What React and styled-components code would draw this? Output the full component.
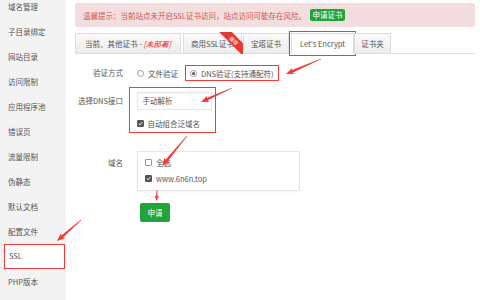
import styled, { createGlobalStyle } from "styled-components";

const GlobalStyle = createGlobalStyle`
  html, body { margin: 0; padding: 0; background: #fff; }
  body {
    font-family: "Noto Sans CJK SC", "Liberation Sans", sans-serif;
    font-size: 7.5px;
    color: #555;
  }
  * { box-sizing: border-box; }
`;

const RED = "#f23a3a";
const GREEN = "#20a53a";

const Page = styled.div`
  position: relative;
  display: flex;
  width: 480px;
  height: 300px;
  overflow: hidden;
`;

const Sidebar = styled.ul`
  width: 66px;
  flex: none;
  margin: 0;
  padding: 0;
  list-style: none;
  background: #f3f3f3;
`;

const NavItem = styled.li`
  height: 25px;
  line-height: 25px;
  padding-left: 8px;
  color: #555;
  white-space: nowrap;
  &:first-child { margin-top: -6px; }
  ${(p) =>
    p.$active &&
    `
    margin: 0 1px 0 4px;
    padding-left: 4px;
    line-height: 22px;
    background: #fff;
    border: 1.5px solid ${RED};
  `}
`;

const Main = styled.div`
  flex: 1;
  padding: 3px 5px 0 9px;
`;

const Notice = styled.div`
  display: flex;
  align-items: center;
  height: 24px;
  padding: 0 8px;
  background: #f2dede;
  border-radius: 3px;
  color: #d9534f;
  white-space: nowrap;
`;

const GreenBtn = styled.button`
  border: none;
  border-radius: 2px;
  background: ${GREEN};
  color: #fff;
  font: inherit;
  padding: 0;
  width: ${(p) => (p.$big ? "30px" : "35px")};
  height: ${(p) => (p.$big ? "19px" : "12px")};
  line-height: ${(p) => (p.$big ? "19px" : "12px")};
  margin-left: ${(p) => (p.$big ? "0" : "4px")};
`;

const Tabs = styled.div`
  display: flex;
  margin-top: 6px;
  height: 21px;
  border-bottom: 1px solid #ddd;
`;

const Tab = styled.div`
  position: relative;
  height: 21px;
  line-height: 19px;
  padding: 0 ${(p) => p.$pad || 8}px;
  margin-right: ${(p) => p.$mr ?? 1}px;
  border: 1px solid #ddd;
  background: ${(p) => (p.$active ? "#fff" : "linear-gradient(#fafafa, #ececec)")};
  color: #555;
  white-space: nowrap;
  ${(p) =>
    p.$active &&
    `
    border-bottom-color: #fff;
    outline: 1.5px solid ${RED};
    outline-offset: 1px;
  `}
`;

const Undeployed = styled.span`
  color: #f22;
  font-style: italic;
`;

const RibbonClip = styled.div`
  position: absolute;
  top: -2px;
  right: -2px;
  width: 25px;
  height: 22px;
  overflow: hidden;
`;

const RibbonBand = styled.div`
  position: absolute;
  left: -4px;
  top: 4px;
  width: 40px;
  height: 9px;
  line-height: 9px;
  background: #e53935;
  color: #fff;
  font-size: 5px;
  text-align: center;
  transform: rotate(45deg);
`;

const Form = styled.div`
  margin-top: 11px;
`;

const Row = styled.div`
  display: flex;
  align-items: flex-start;
  margin-top: ${(p) => p.$gap || 0}px;
`;

const Label = styled.div`
  width: 48px;
  margin-right: 14px;
  text-align: right;
  white-space: nowrap;
  padding-top: ${(p) => p.$top || 0}px;
  line-height: ${(p) => p.$lh || 16}px;
`;

const Options = styled.div`
  display: flex;
  align-items: center;
  height: 16px;
`;

const Option = styled.label`
  display: flex;
  align-items: center;
  gap: 4px;
  white-space: nowrap;
  ${(p) =>
    p.$marked &&
    `
    height: 16px;
    margin-left: 7px;
    padding: 0 4px;
    border: 1.5px solid ${RED};
  `}
`;

const Radio = styled.span`
  width: 7px;
  height: 7px;
  border: 1px solid #999;
  border-radius: 50%;
  display: flex;
  align-items: center;
  justify-content: center;
  &::after {
    content: "";
    display: ${(p) => (p.$on ? "block" : "none")};
    width: 3px;
    height: 3px;
    border-radius: 50%;
    background: #555;
  }
`;

const Check = styled.span`
  width: 7px;
  height: 7px;
  border-radius: 1px;
  border: 1px solid ${(p) => (p.$on ? "#555" : "#999")};
  background: ${(p) => (p.$on ? "#555" : "#fff")};
  display: flex;
  align-items: center;
  justify-content: center;
`;

const MarkedBox = styled.div`
  width: 87px;
  margin-left: -8px;
  padding: 3.5px 6.5px 3px;
  border: 1.5px solid ${RED};
`;

const Input = styled.div`
  width: 75px;
  height: 18px;
  line-height: 16px;
  padding-left: 5px;
  border: 1px solid #e6e6e6;
  box-shadow: inset 0 1px 1px rgba(0, 0, 0, 0.04);
`;

const CheckLine = styled.label`
  display: flex;
  align-items: center;
  gap: 4px;
  height: ${(p) => p.$h || 16}px;
  margin-top: ${(p) => p.$mt || 0}px;
  white-space: nowrap;
`;

const DomainBox = styled.div`
  width: 163px;
  padding: 3px 7px;
  border: 1px solid #e6e6e6;
  box-shadow: 0 1px 2px rgba(0, 0, 0, 0.05);
`;

const Submit = styled.div`
  margin: 12px 0 0 65px;
`;

const Overlay = styled.svg`
  position: absolute;
  left: 0;
  top: 0;
  pointer-events: none;
`;

const Tick = () => (
  <svg width="5" height="5" viewBox="0 0 10 10">
    <path d="M1.5 5.2 L4 7.6 L8.6 2.4" fill="none" stroke="#fff" strokeWidth="2" />
  </svg>
);

const arrowPoints = (x1, y1, x2, y2, w = 2.6, hl = 7, hw = 6.5) => {
  const dx = x2 - x1;
  const dy = y2 - y1;
  const len = Math.hypot(dx, dy);
  const ux = dx / len, uy = dy / len;
  const nx = -uy, ny = ux;
  const hlen = Math.min(hl, len * 0.7);
  const bx = x2 - ux * hlen, by = y2 - uy * hlen;
  const p = [
    [x1 + nx * 0.3, y1 + ny * 0.3],
    [bx + (nx * w) / 2, by + (ny * w) / 2],
    [bx + (nx * hw) / 2 - ux, by + (ny * hw) / 2 - uy],
    [x2, y2],
    [bx - (nx * hw) / 2 - ux, by - (ny * hw) / 2 - uy],
    [bx - (nx * w) / 2, by - (ny * w) / 2],
    [x1 - nx * 0.3, y1 - ny * 0.3],
  ];
  return p.map((q) => q.map((v) => v.toFixed(1)).join(",")).join(" ");
};

const arrows = [
  [321, 59, 286, 74],
  [232, 88, 201, 102],
  [187, 136, 162, 166],
  [157, 190, 156.5, 201, 1.6, 4.5, 4.5],
  [81, 220, 57, 241],
];

const navItems = [
  "域名管理", "子目录绑定", "网站目录", "访问限制", "应用程序池", "错误页",
  "流量限制", "伪静态", "默认文档", "配置文件", "SSL", "PHP版本",
];

export default function App() {
  return (
    <Page>
      <GlobalStyle />
      <Sidebar>
        {navItems.map((n) => (
          <NavItem key={n} $active={n === "SSL"}>{n}</NavItem>
        ))}
      </Sidebar>

      <Main>
        <Notice>
          温馨提示：当前站点未开启SSL证书访问，站点访问可能存在风险。
          <GreenBtn>申请证书</GreenBtn>
        </Notice>

        <Tabs>
          <Tab $pad={9} $mr={2}>当前、其他证书 - <Undeployed>[未部署]</Undeployed></Tab>
          <Tab $pad={7}>
            商用SSL证书
            <RibbonClip><RibbonBand>推荐</RibbonBand></RibbonClip>
          </Tab>
          <Tab $pad={7} $mr={2}>宝塔证书</Tab>
          <Tab $active $pad={8} $mr={0}>Let's Encrypt</Tab>
          <Tab $pad={6}>证书夹</Tab>
        </Tabs>

        <Form>
          <Row>
            <Label>验证方式</Label>
            <Options>
              <Option><Radio />文件验证</Option>
              <Option $marked><Radio $on />DNS验证(支持通配符)</Option>
            </Options>
          </Row>

          <Row $gap={6}>
            <Label $top={5} $lh={18}>选择DNS接口</Label>
            <MarkedBox>
              <Input>手动解析</Input>
              <CheckLine $h={10} $mt={9}><Check $on><Tick /></Check>自动组合泛域名</CheckLine>
            </MarkedBox>
          </Row>

          <Row $gap={18}>
            <Label $top={4}>域名</Label>
            <DomainBox>
              <CheckLine><Check />全选</CheckLine>
              <CheckLine><Check $on><Tick /></Check>www.6n6n.top</CheckLine>
            </DomainBox>
          </Row>

          <Submit><GreenBtn $big>申请</GreenBtn></Submit>
        </Form>
      </Main>

      <Overlay width="480" height="300">
        {arrows.map((a, i) => (
          <polygon key={i} points={arrowPoints(...a)} fill={RED} />
        ))}
      </Overlay>
    </Page>
  );
}
